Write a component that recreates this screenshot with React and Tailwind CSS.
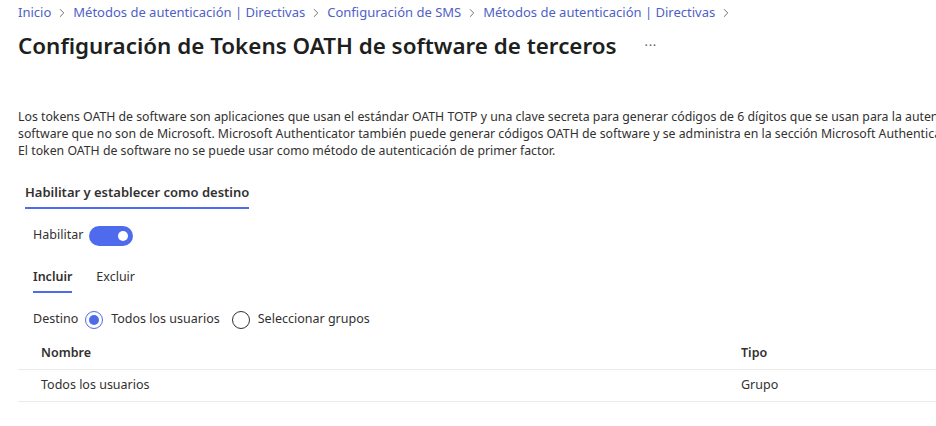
import { ChevronRight } from "lucide-react";

const crumbs = [
  "Inicio",
  "Métodos de autenticación | Directivas",
  "Configuración de SMS",
  "Métodos de autenticación | Directivas",
];

export default function App() {
  return (
    <div
      className="w-[936px] h-[426px] overflow-hidden bg-white text-[#323130]"
      style={{ fontFamily: '"Segoe UI", "Noto Sans", sans-serif' }}
    >
      {/* breadcrumb */}
      <div className="flex items-center h-[26px] pl-[18px] text-[13px] text-[#4f5fc8]">
        {crumbs.map((c, i) => (
          <div key={i} className="flex items-center">
            <span>{c}</span>
            <ChevronRight className="w-[14px] h-[14px] mx-[4px] text-[#605e5c]" strokeWidth={1.5} />
          </div>
        ))}
      </div>

      {/* title */}
      <div className="flex items-center h-[40px] pl-[18px]">
        <h1 className="text-[22.4px] font-semibold text-[#201f1e]">
          Configuración de Tokens OATH de software de terceros
        </h1>
        <span className="ml-[28px] text-[13px] text-[#605e5c] tracking-wider">···</span>
      </div>

      {/* description */}
      <div className="mt-[42px] pl-[18px] text-[12.3px] leading-[17px] whitespace-nowrap">
        <p>
          Los tokens OATH de software son aplicaciones que usan el estándar OATH TOTP y una clave secreta para generar códigos de 6 dígitos que se usan para la autenticación.
        </p>
        <p>
          software que no son de Microsoft. Microsoft Authenticator también puede generar códigos OATH de software y se administra en la sección Microsoft Authenticator.
        </p>
        <p>El token OATH de software no se puede usar como método de autenticación de primer factor.</p>
      </div>

      {/* section tab */}
      <div className="mt-[24px] ml-[25px] inline-flex flex-col">
        <span className="text-[13px] font-semibold text-[#323130] pb-[4px]">
          Habilitar y establecer como destino
        </span>
        <div className="h-[2px] bg-[#4f6bed]" />
      </div>

      {/* toggle */}
      <div className="flex items-center gap-[6px] pl-[33px] mt-[17px] text-[12.5px]">
        <span>Habilitar</span>
        <div className="w-[44px] h-[20px] rounded-full bg-[#4f6bed] flex items-center justify-end pr-[5px]">
          <div className="w-[10px] h-[10px] rounded-full bg-white" />
        </div>
      </div>

      {/* include/exclude */}
      <div className="flex gap-[24px] pl-[33px] mt-[22px] text-[12.5px]">
        <div className="flex flex-col">
          <span className="font-semibold pb-[5px]">Incluir</span>
          <div className="h-[2px] bg-[#4f6bed]" />
        </div>
        <span>Excluir</span>
      </div>

      {/* destino */}
      <div className="flex items-center pl-[33px] mt-[17px] text-[12.5px]">
        <span>Destino</span>
        <div className="ml-[7px] w-[18px] h-[18px] rounded-full border border-[#4f6bed] flex items-center justify-center">
          <div className="w-[10px] h-[10px] rounded-full bg-[#4f6bed]" />
        </div>
        <span className="ml-[8px]">Todos los usuarios</span>
        <div className="ml-[12px] w-[18px] h-[18px] rounded-full border border-[#323130]" />
        <span className="ml-[8px]">Seleccionar grupos</span>
      </div>

      {/* table */}
      <div className="ml-[18px] mt-[8px] text-[12.5px]">
        <div className="flex h-[33px] items-center border-b border-[#edebe9]">
          <span className="pl-[23px] w-[723px] font-semibold">Nombre</span>
          <span className="font-semibold">Tipo</span>
        </div>
        <div className="flex h-[32px] items-center border-b border-[#edebe9]">
          <span className="pl-[23px] w-[723px]">Todos los usuarios</span>
          <span>Grupo</span>
        </div>
      </div>
    </div>
  );
}
